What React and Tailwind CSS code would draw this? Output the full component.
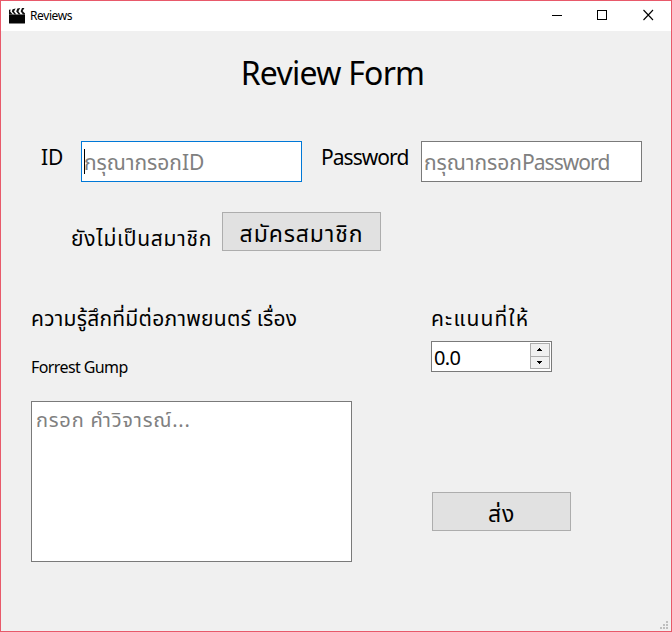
function ClapperIcon() {
  return (
    <svg width="16" height="16" viewBox="0 0 16 16" className="mb-px shrink-0">
      <path d="M0 6.400h16V15q0 .6-.6.6H.6Q0 15.600 0 15z" fill="#050505" />
      <path d="M0 1.800 1.600 1.400 1.200 3.400 3.800 6.600H0zM3.600 1.200 6.600.6 5 3.400 7.400 6.600H5.600L2.800 3.600zM8.400.6 11.200 0 9.400 3.200 11.600 6.600H9.800L7.200 3.400zM13 0 15.400 0 13.600 3 16 5.600V6.600H14L11.600 3.200z" fill="#111" />
    </svg>
  );
}

function TitleBar() {
  return (
    <div className="flex h-[30px] shrink-0 items-center bg-white pl-2">
      <ClapperIcon />
      <span className="ml-[5px] text-xs tracking-[-0.4px]">Reviews</span>
      <svg width="102" height="12" viewBox="0 0 102 12" className="mb-[2px] ml-auto mr-[17px]" fill="none" stroke="#000" shapeRendering="crispEdges">
        <path d="M0 6.500h10" />
        <path d="M45.500 1.500h9v9h-9z" />
        <path d="m91.500 1 9.500 10M101 1l-9.500 10" shapeRendering="auto" strokeWidth="1.1" />
      </svg>
    </div>
  );
}

function Field({ children, caret }) {
  return (
    <div className={`flex h-[41px] w-[221px] items-center border bg-white pl-[2px] text-[21px] text-[#808080] ${caret ? "border-[#0078d7]" : "border-[#7a7a7a]"}`}>
      <span className={`h-[25px] w-px ${caret ? "bg-black" : "bg-transparent"}`} />
      <span className="-ml-px whitespace-nowrap pt-[3px]">{children}</span>
    </div>
  );
}

export default function App() {
  return (
    <div className="flex h-[632px] w-[672px] flex-col overflow-hidden whitespace-nowrap border border-[#e8596a] bg-[#f0f0f0] font-['Noto_Sans','Noto_Sans_Thai',sans-serif] text-black">
      <TitleBar />
      <h1 className="mt-[18px] flex h-12 shrink-0 items-center justify-center pr-[7px] text-[32px] tracking-[-0.75px]">Review Form</h1>
      <div className="mt-11 flex h-[41px] shrink-0 pl-10">
        <span className="w-10 text-[21px] leading-8">ID</span>
        <Field caret>กรุณากรอกID</Field>
        <span className="ml-[19px] w-[100px] text-[21px] leading-8 tracking-[-0.95px]">Password</span>
        <Field>กรุณากรอก<span className="tracking-[-0.95px]">Password</span></Field>
      </div>
      <div className="mt-[30px] flex h-[39px] shrink-0 pl-[70px]">
        <span className="w-[151px] pt-[10px] text-[21px] leading-8 tracking-[0.75px]">ยังไม่เป็นสมาชิก</span>
        <button className="h-[39px] w-[159px] border border-[#adadad] bg-[#e1e1e1] pt-[2px] text-[23px] leading-8 tracking-[0.9px]">สมัครสมาชิก</button>
      </div>
      <div className="mt-[50px] flex pl-[30px]">
        <div className="w-[400px]">
          <p className="h-8 pt-px text-[21px] leading-8 tracking-[0.26px]">ความรู้สึกที่มีต่อภาพยนตร์ เรื่อง</p>
          <p className="mt-[22px] h-6 text-base leading-6 tracking-[-0.6px]">Forrest Gump</p>
          <div className="mt-[22px] h-[161px] w-[321px] border border-[#7a7a7a] bg-white pl-1 text-[20px] leading-9 tracking-[0.8px] text-[#808080]">กรอก คำวิจารณ์...</div>
        </div>
        <div>
          <p className="h-8 pt-px text-[21px] leading-8 tracking-[1.2px]">คะแนนที่ให้</p>
          <div className="mt-2 flex h-[31px] w-[121px] items-center justify-between border border-[#7a7a7a] bg-white pl-[2px] pr-px text-[20px] tracking-[-0.7px]">
            <span className="pt-[2px]">0.0</span>
            <svg width="20" height="27" viewBox="0 0 20 27" shapeRendering="crispEdges">
              <path d="M.5.5h19v13H.5zM.5 13.500h19v12H.5z" fill="#f0f0f0" stroke="#adadad" />
              <path d="M9 5h1v1h1v1h1v1H7V7h1V6h1zM7 18h5v1h-1v1h-1v1H9v-1H8v-1H7z" />
            </svg>
          </div>
          <button className="ml-px mt-[120px] h-[39px] w-[139px] border border-[#adadad] bg-[#e1e1e1] pt-[2px] text-[23px] leading-8 tracking-[0.7px]">ส่ง</button>
        </div>
      </div>
      <svg width="8" height="8" viewBox="0 0 8 8" className="mb-[2px] ml-auto mr-[3px] mt-auto" fill="#bfbfbf">
        <path d="M6 0h2v2H6zM3 3h2v2H3zM6 3h2v2H6zM0 6h2v2H0zM3 6h2v2H3zM6 6h2v2H6z" />
      </svg>
    </div>
  );
}
